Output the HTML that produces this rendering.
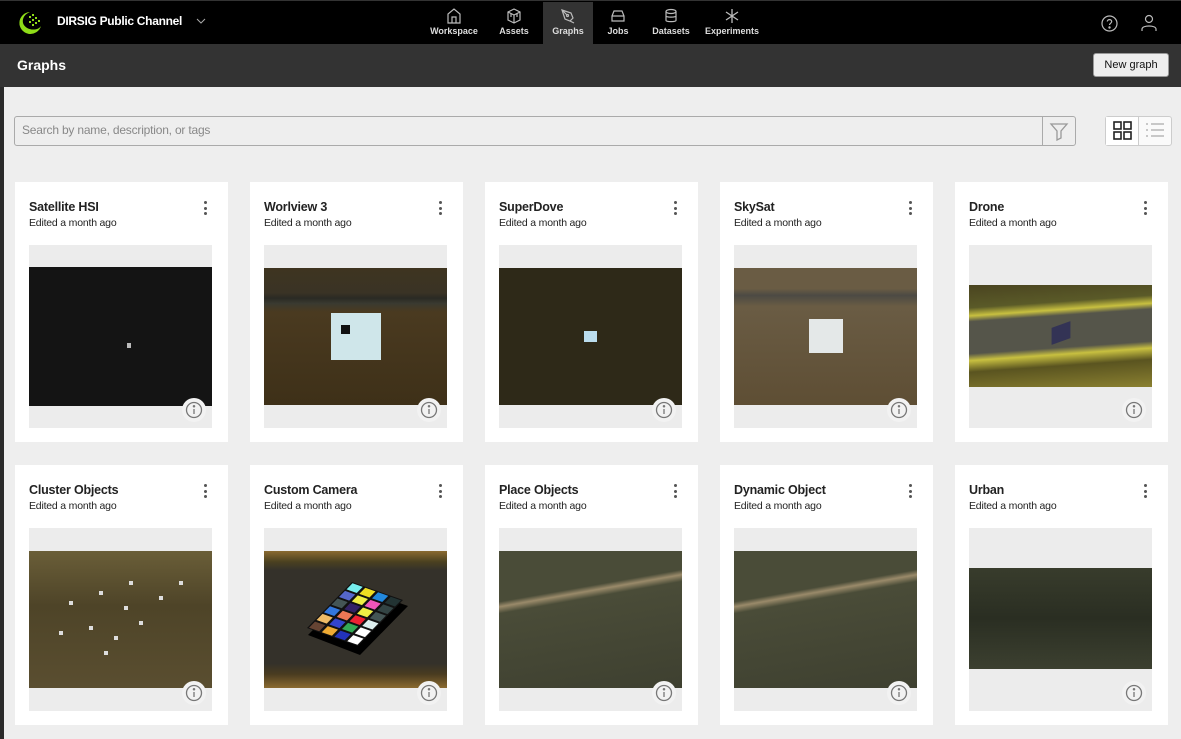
<!DOCTYPE html>
<html><head><meta charset="utf-8"><style>
*{box-sizing:border-box;margin:0;padding:0}
body{width:1181px;height:739px;overflow:hidden;background:#eeeeee;font-family:"Liberation Sans",sans-serif;position:relative}
.top{position:absolute;left:0;top:0;width:1181px;height:44px;background:#000;border-top:1px solid #333}
.sub{position:absolute;left:0;top:44px;width:1181px;height:43px;background:#333}
.strip{position:absolute;left:0;top:87px;width:4px;height:652px;background:#2a2a2a}
.nav{position:absolute;top:1px;height:43px;color:#ddd;font-size:9px;font-weight:bold;text-align:center}
.nav svg{display:block;margin:6px auto 2px}
.card{position:absolute;width:213px;height:260px;background:#fff}
.card h3{position:absolute;left:14px;top:18px;font-size:12.5px;font-weight:bold;color:#222;letter-spacing:-0.2px}
.card .ed{position:absolute;left:14px;top:35px;font-size:10.5px;color:#222;letter-spacing:-0.2px}
.card .dots{position:absolute;right:21px;top:19px;width:3px}
.card .dots i{display:block;width:3px;height:3px;border-radius:50%;background:#555;margin-bottom:2.5px}
.gbox{position:absolute;left:14px;top:63px;width:183px;height:183px;background:#ececec;overflow:hidden}
.img{position:absolute;left:0;width:183px;overflow:hidden}
.info{position:absolute;right:6px;bottom:6px;width:24px;height:24px;border-radius:50%;background:#f2f2f2;}
.info svg{position:absolute;left:3px;top:3px}
</style></head><body>
<div class="top">
 <svg style="position:absolute;left:17px;top:9px" width="26" height="26" viewBox="0 0 26 26"><path d="M13 2A11 11 0 1 0 24 16C20 22 8 20 6 13C5 8 8 4 13 2Z" fill="#8fdc18"/><g fill="#8fdc18"><rect x="12" y="6" width="2" height="2"/><rect x="15" y="4" width="2" height="2"/><rect x="15" y="9" width="2" height="2"/><rect x="18" y="7" width="2" height="2"/><rect x="12" y="11" width="2" height="2"/><rect x="18" y="12" width="2" height="2"/><rect x="21" y="10" width="2" height="2"/><rect x="15" y="14" width="2" height="2"/></g></svg>
 <div style="position:absolute;left:57px;top:13px;color:#fff;font-size:12px;font-weight:bold;letter-spacing:-0.3px">DIRSIG Public Channel</div>
 <svg style="position:absolute;left:196px;top:17px" width="10" height="7"><path d="M1 1L5 5L9 1" stroke="#aaa" fill="none"/></svg>
 <div class="nav" style="left:428px;width:52px"><svg width="16" height="16" viewBox="0 0 16 16" fill="none" stroke="#bbb" stroke-width="1.2"><path d="M2 15V6L8 1L14 6V15ZM6 15V9H10V15"/></svg>Workspace</div>
 <div class="nav" style="left:494px;width:40px"><svg width="16" height="16" viewBox="0 0 16 16" fill="none" stroke="#bbb" stroke-width="1.2"><path d="M8 1L14 4V12L8 15L2 12V4ZM2 4L8 7L14 4M8 7V15M5 5.5V9M11 5.5V9"/></svg>Assets</div>
 <div class="nav" style="left:543px;width:50px;background:#333"><svg width="16" height="16" viewBox="0 0 16 16" fill="none" stroke="#bbb" stroke-width="1.2"><path d="M2 2L11 5L13 10L10 13L5 11ZM2 2L7 7M10 13L14 15"/><circle cx="7.5" cy="7.5" r="1"/></svg>Graphs</div>
 <div class="nav" style="left:603px;width:30px"><svg width="16" height="16" viewBox="0 0 16 16" fill="none" stroke="#bbb" stroke-width="1.2"><path d="M2 8L4 3H12L14 8V13H2ZM2 8H14"/></svg>Jobs</div>
 <div class="nav" style="left:652px;width:38px"><svg width="16" height="16" viewBox="0 0 16 16" fill="none" stroke="#bbb" stroke-width="1.2"><ellipse cx="8" cy="3.5" rx="5" ry="2"/><path d="M3 3.5V12.5C3 14 13 14 13 12.5V3.5M3 8C3 9.5 13 9.5 13 8"/></svg>Datasets</div>
 <div class="nav" style="left:705px;width:54px"><svg width="16" height="16" viewBox="0 0 16 16" fill="none" stroke="#bbb" stroke-width="1.3"><path d="M8 1V15M2 4L14 12M14 4L2 12"/></svg>Experiments</div>
 <svg style="position:absolute;left:1101px;top:14px" width="17" height="17" viewBox="0 0 17 17" fill="none" stroke="#bbb" stroke-width="1.2"><circle cx="8.5" cy="8.5" r="7.5"/><path d="M6.3 6.5C6.3 4 10.7 4 10.7 6.5C10.7 8.3 8.5 8.3 8.5 10"/><circle cx="8.5" cy="12.5" r=".6" fill="#bbb"/></svg>
 <svg style="position:absolute;left:1141px;top:13px" width="16" height="18" viewBox="0 0 16 18" fill="none" stroke="#bbb" stroke-width="1.2"><circle cx="8" cy="5" r="3.5"/><path d="M1 17V15C1 11 15 11 15 15V17"/></svg>
</div>
<div class="sub">
 <div style="position:absolute;left:17px;top:13px;color:#fff;font-size:14px;font-weight:bold">Graphs</div>
 <div style="position:absolute;left:1093px;top:9px;width:76px;height:24px;background:#eee;border-radius:3px;border:1px solid #999;font-size:11px;color:#111;text-align:center;line-height:22px">New graph</div>
</div>
<div class="strip"></div>
<div style="position:absolute;left:14px;top:116px;width:1062px;height:30px;background:#eee;border:1px solid #aaa;border-radius:3px"></div>
<div style="position:absolute;left:1042px;top:117px;width:1px;height:28px;background:#aaa"></div>
<div style="position:absolute;left:22px;top:123px;font-size:12px;color:#888;letter-spacing:-0.2px">Search by name, description, or tags</div>
<svg style="position:absolute;left:1049px;top:121px" width="20" height="20" viewBox="0 0 20 20" fill="none" stroke="#999" stroke-width="1.3"><path d="M2 3H18L12 10V17L8 19V10Z"/></svg>
<div style="position:absolute;left:1105px;top:116px;width:67px;height:30px;border:1px solid #ccc;border-radius:3px;background:#fafafa"></div>
<div style="position:absolute;left:1106px;top:117px;width:33px;height:28px;background:#fff;border-right:1px solid #ccc"></div>
<svg style="position:absolute;left:1113px;top:121px" width="19" height="19" viewBox="0 0 19 19" fill="none" stroke="#222" stroke-width="1.6"><rect x="1" y="1" width="7" height="7"/><rect x="11" y="1" width="7" height="7"/><rect x="1" y="11" width="7" height="7"/><rect x="11" y="11" width="7" height="7"/></svg>
<svg style="position:absolute;left:1145px;top:122px" width="20" height="16" viewBox="0 0 20 16" stroke="#aaa" stroke-width="1.2"><path d="M1 2H3M1 8H3M1 14H3M6 2H19M6 8H19M6 14H19"/></svg>

<div class="card" style="left:15px;top:182px"><h3>Satellite HSI</h3><div class="ed">Edited a month ago</div><div class="dots"><i></i><i></i><i></i></div><div class="gbox"><div class="img" style="top:22px;height:139px;background:#141414"><div style="position:absolute;left:98px;top:76px;width:4px;height:5px;background:#bbb"></div></div><div class="info"><svg width="18" height="18" viewBox="0 0 18 18" fill="none" stroke="#777" stroke-width="1.3"><circle cx="9" cy="9" r="7.5"/><path d="M9 8V13"/><circle cx="9" cy="5.3" r=".6" fill="#777"/></svg></div></div></div>

<div class="card" style="left:250px;top:182px"><h3>Worlview 3</h3><div class="ed">Edited a month ago</div><div class="dots"><i></i><i></i><i></i></div><div class="gbox"><div class="img" style="top:23px;height:137px;background:linear-gradient(#3e3420 0,#3a3325 18%,#2a2a24 22%,#3a3a30 26%,#4a3a20 32%,#3e3018 100%)"><div style="position:absolute;left:67px;top:45px;width:50px;height:47px;background:#cfe6ea"><div style="position:absolute;left:10px;top:12px;width:9px;height:9px;background:#111"></div></div></div><div class="info"><svg width="18" height="18" viewBox="0 0 18 18" fill="none" stroke="#777" stroke-width="1.3"><circle cx="9" cy="9" r="7.5"/><path d="M9 8V13"/><circle cx="9" cy="5.3" r=".6" fill="#777"/></svg></div></div></div>

<div class="card" style="left:485px;top:182px"><h3>SuperDove</h3><div class="ed">Edited a month ago</div><div class="dots"><i></i><i></i><i></i></div><div class="gbox"><div class="img" style="top:23px;height:137px;background:#2e2918"><div style="position:absolute;left:85px;top:63px;width:13px;height:11px;background:#bde"></div></div><div class="info"><svg width="18" height="18" viewBox="0 0 18 18" fill="none" stroke="#777" stroke-width="1.3"><circle cx="9" cy="9" r="7.5"/><path d="M9 8V13"/><circle cx="9" cy="5.3" r=".6" fill="#777"/></svg></div></div></div>

<div class="card" style="left:720px;top:182px"><h3>SkySat</h3><div class="ed">Edited a month ago</div><div class="dots"><i></i><i></i><i></i></div><div class="gbox"><div class="img" style="top:23px;height:137px;background:linear-gradient(#6a5c44 0,#6a5c44 15%,#4c4a44 20%,#6a5c44 28%,#5e4e34 100%)"><div style="position:absolute;left:75px;top:51px;width:34px;height:34px;background:#e4e8e8"></div></div><div class="info"><svg width="18" height="18" viewBox="0 0 18 18" fill="none" stroke="#777" stroke-width="1.3"><circle cx="9" cy="9" r="7.5"/><path d="M9 8V13"/><circle cx="9" cy="5.3" r=".6" fill="#777"/></svg></div></div></div>

<div class="card" style="left:955px;top:182px"><h3>Drone</h3><div class="ed">Edited a month ago</div><div class="dots"><i></i><i></i><i></i></div><div class="gbox"><div class="img" style="top:40px;height:102px;background:linear-gradient(176deg,#4a4420 0,#5a5a28 20%,#c8c040 27%,#55554a 32%,#55554a 60%,#c8c040 66%,#5a5420 76%,#8a8030 100%)"><div style="position:absolute;left:82px;top:40px;width:20px;height:16px;background:#335;transform:rotate(-20deg) skew(-20deg)"></div></div><div class="info"><svg width="18" height="18" viewBox="0 0 18 18" fill="none" stroke="#777" stroke-width="1.3"><circle cx="9" cy="9" r="7.5"/><path d="M9 8V13"/><circle cx="9" cy="5.3" r=".6" fill="#777"/></svg></div></div></div>

<div class="card" style="left:15px;top:465px"><h3>Cluster Objects</h3><div class="ed">Edited a month ago</div><div class="dots"><i></i><i></i><i></i></div><div class="gbox"><div class="img" style="top:23px;height:137px;background:linear-gradient(#6a5e38,#4e4428 40%,#5a4e30)"><svg width="183" height="137"><g fill="#ddd"><rect x="40" y="50" width="4" height="4"/><rect x="70" y="40" width="4" height="4"/><rect x="95" y="55" width="4" height="4"/><rect x="60" y="75" width="4" height="4"/><rect x="85" y="85" width="4" height="4"/><rect x="110" y="70" width="4" height="4"/><rect x="130" y="45" width="4" height="4"/><rect x="30" y="80" width="4" height="4"/><rect x="75" y="100" width="4" height="4"/><rect x="100" y="30" width="4" height="4"/><rect x="150" y="30" width="4" height="4"/></g></svg></div><div class="info"><svg width="18" height="18" viewBox="0 0 18 18" fill="none" stroke="#777" stroke-width="1.3"><circle cx="9" cy="9" r="7.5"/><path d="M9 8V13"/><circle cx="9" cy="5.3" r=".6" fill="#777"/></svg></div></div></div>

<div class="card" style="left:250px;top:465px"><h3>Custom Camera</h3><div class="ed">Edited a month ago</div><div class="dots"><i></i><i></i><i></i></div><div class="gbox"><div class="img" style="top:23px;height:137px;background:linear-gradient(#8a6a30 0,#4a4020 8%,#34312a 14%,#34312a 82%,#4a3c20 90%,#8a6a30 100%)"><svg width="183" height="137"><polygon points="88,31 141,50 93,99 41,79" fill="#000" transform="translate(3,5)"/><g transform="matrix(12.75,4.5,-7.5,7.67,88,31)"><rect x="0" y="0" width="4" height="6" fill="#111"/>
<rect x=".1" y=".1" width=".8" height=".8" fill="#7ee"/><rect x="1.1" y=".1" width=".8" height=".8" fill="#ed2"/><rect x="2.1" y=".1" width=".8" height=".8" fill="#28d"/><rect x="3.1" y=".1" width=".8" height=".8" fill="#233"/>
<rect x=".1" y="1.1" width=".8" height=".8" fill="#56c"/><rect x="1.1" y="1.1" width=".8" height=".8" fill="#ee4"/><rect x="2.1" y="1.1" width=".8" height=".8" fill="#e5b"/><rect x="3.1" y="1.1" width=".8" height=".8" fill="#344"/>
<rect x=".1" y="2.1" width=".8" height=".8" fill="#455"/><rect x="1.1" y="2.1" width=".8" height=".8" fill="#326"/><rect x="2.1" y="2.1" width=".8" height=".8" fill="#ee4"/><rect x="3.1" y="2.1" width=".8" height=".8" fill="#455"/>
<rect x=".1" y="3.1" width=".8" height=".8" fill="#37d"/><rect x="1.1" y="3.1" width=".8" height=".8" fill="#e75"/><rect x="2.1" y="3.1" width=".8" height=".8" fill="#e23"/><rect x="3.1" y="3.1" width=".8" height=".8" fill="#dee"/>
<rect x=".1" y="4.1" width=".8" height=".8" fill="#eb6"/><rect x="1.1" y="4.1" width=".8" height=".8" fill="#34c"/><rect x="2.1" y="4.1" width=".8" height=".8" fill="#3a5"/><rect x="3.1" y="4.1" width=".8" height=".8" fill="#fff"/>
<rect x=".1" y="5.1" width=".8" height=".8" fill="#643"/><rect x="1.1" y="5.1" width=".8" height=".8" fill="#ea3"/><rect x="2.1" y="5.1" width=".8" height=".8" fill="#23b"/><rect x="3.1" y="5.1" width=".8" height=".8" fill="#fff"/></g></svg></div><div class="info"><svg width="18" height="18" viewBox="0 0 18 18" fill="none" stroke="#777" stroke-width="1.3"><circle cx="9" cy="9" r="7.5"/><path d="M9 8V13"/><circle cx="9" cy="5.3" r=".6" fill="#777"/></svg></div></div></div>

<div class="card" style="left:485px;top:465px"><h3>Place Objects</h3><div class="ed">Edited a month ago</div><div class="dots"><i></i><i></i><i></i></div><div class="gbox"><div class="img" style="top:23px;height:137px;background:linear-gradient(170deg,#4a4c38 0,#4a4c38 30%,#9a8a6a 33%,#4a4c38 37%,#3e4030 100%)"></div><div class="info"><svg width="18" height="18" viewBox="0 0 18 18" fill="none" stroke="#777" stroke-width="1.3"><circle cx="9" cy="9" r="7.5"/><path d="M9 8V13"/><circle cx="9" cy="5.3" r=".6" fill="#777"/></svg></div></div></div>

<div class="card" style="left:720px;top:465px"><h3>Dynamic Object</h3><div class="ed">Edited a month ago</div><div class="dots"><i></i><i></i><i></i></div><div class="gbox"><div class="img" style="top:23px;height:137px;background:linear-gradient(170deg,#4a4c38 0,#4a4c38 30%,#9a8a6a 33%,#4a4c38 37%,#3e4030 100%)"></div><div class="info"><svg width="18" height="18" viewBox="0 0 18 18" fill="none" stroke="#777" stroke-width="1.3"><circle cx="9" cy="9" r="7.5"/><path d="M9 8V13"/><circle cx="9" cy="5.3" r=".6" fill="#777"/></svg></div></div></div>

<div class="card" style="left:955px;top:465px"><h3>Urban</h3><div class="ed">Edited a month ago</div><div class="dots"><i></i><i></i><i></i></div><div class="gbox"><div class="img" style="top:40px;height:101px;background:linear-gradient(#383c2c,#2a2e22 50%,#3c4030)"></div><div class="info"><svg width="18" height="18" viewBox="0 0 18 18" fill="none" stroke="#777" stroke-width="1.3"><circle cx="9" cy="9" r="7.5"/><path d="M9 8V13"/><circle cx="9" cy="5.3" r=".6" fill="#777"/></svg></div></div></div>
</body></html>
